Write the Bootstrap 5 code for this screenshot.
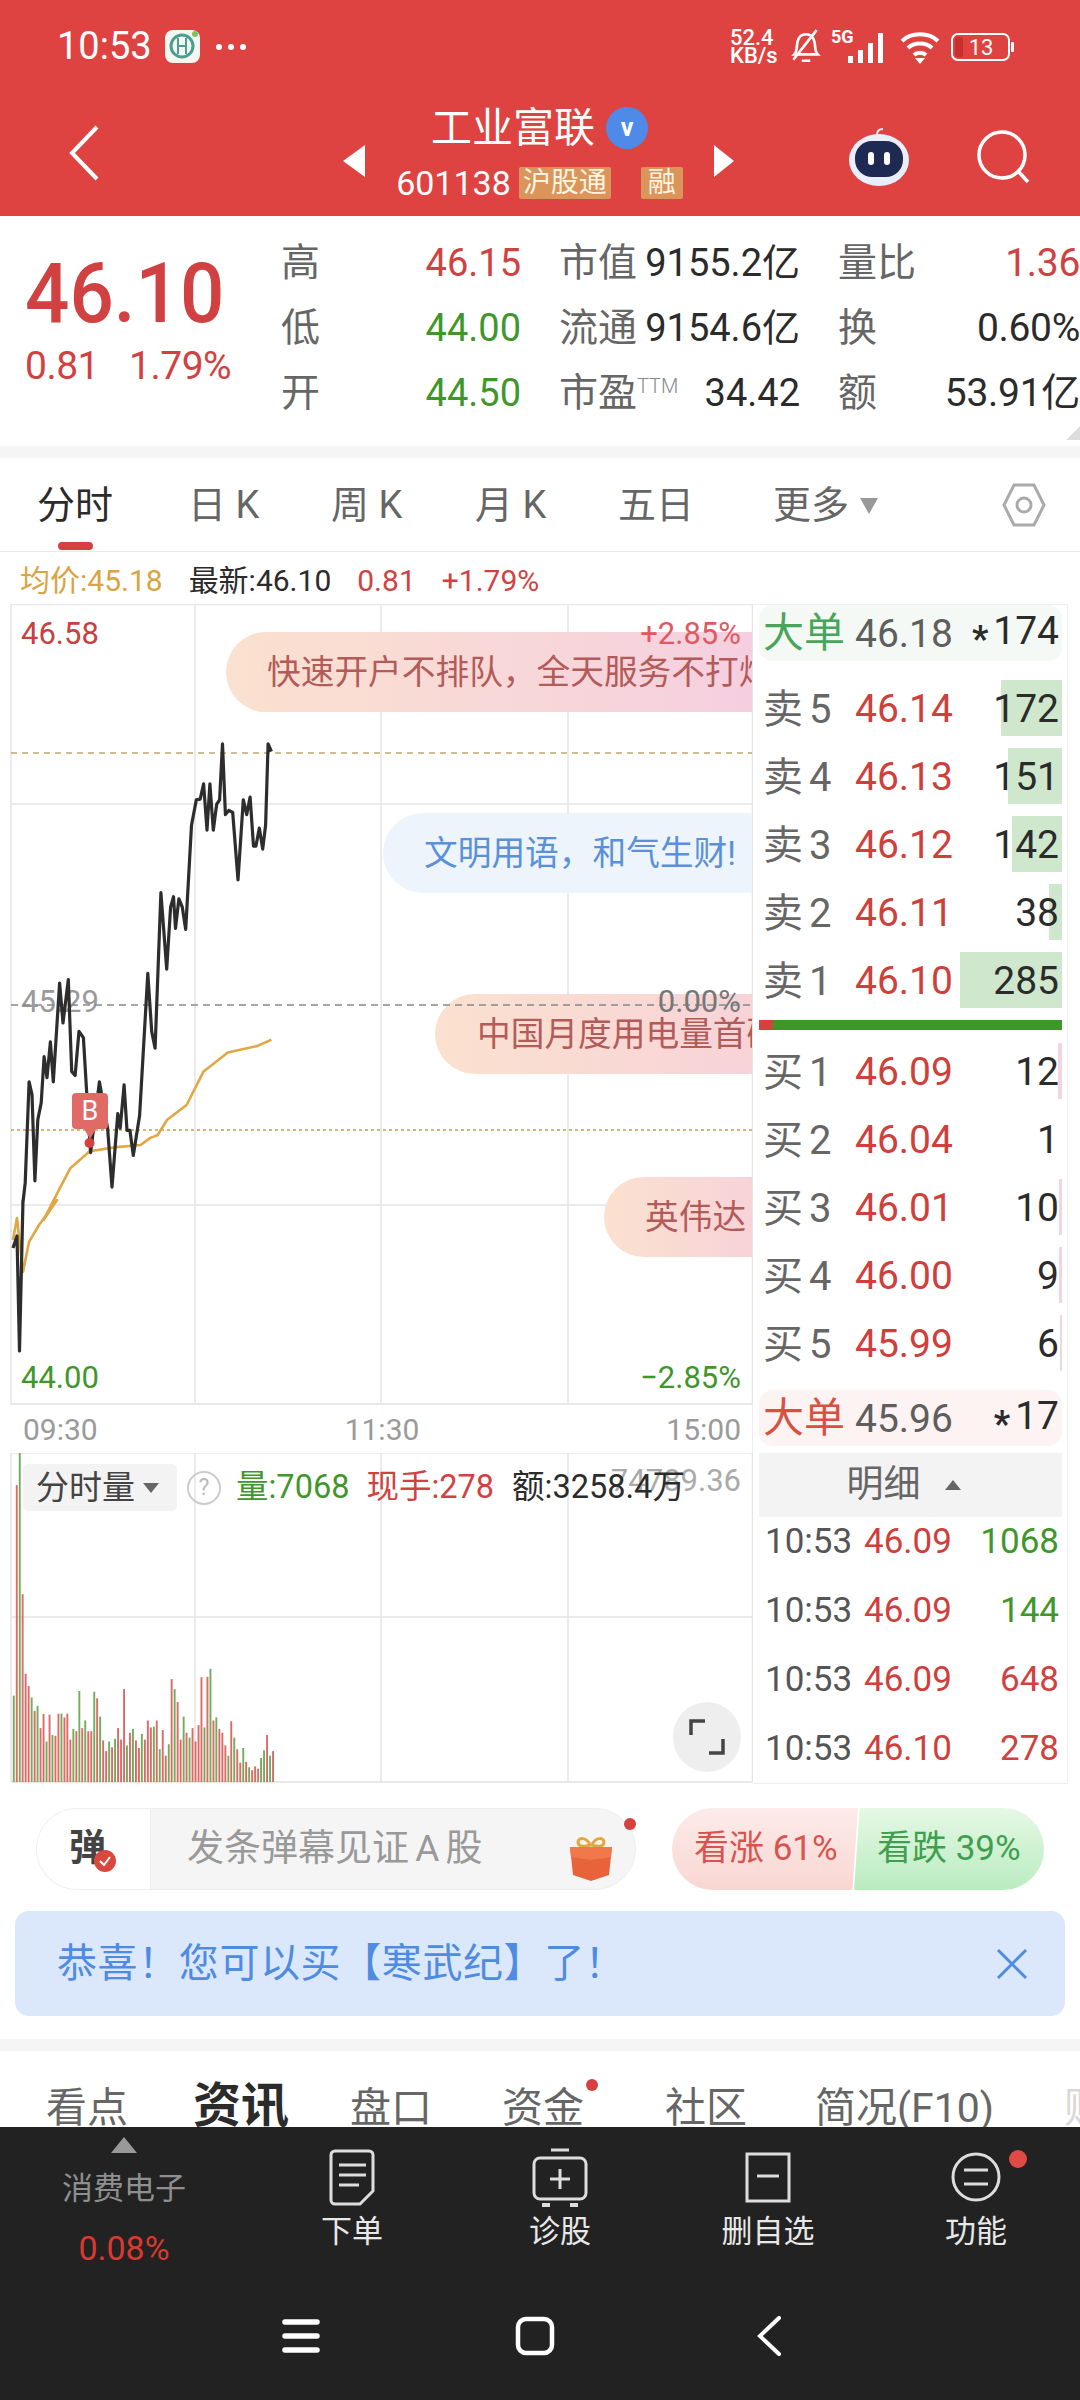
<!DOCTYPE html>
<html lang="zh-CN">
<head>
<meta charset="UTF-8">
<meta name="viewport" content="width=device-width, initial-scale=1.0">
<title>工业富联</title>
<link href="https://cdn.jsdelivr.net/npm/bootstrap@5.3.0/dist/css/bootstrap.min.css" rel="stylesheet">
<style>
body { margin: 0; background: #fff; font-family: Roboto, "Noto Sans CJK SC", sans-serif; color: #2b2b2b; }
.app-page { width: 1080px; height: 2400px; overflow: hidden; }
.red-head { background: #de4341; height: 216px; color: #fff; }
.status-row { height: 90px; padding: 3px 65px 0 57px; }
.status-time { font-size: 38px; width: 108px; }
.net-speed { font-size: 22px; line-height: 18px; font-weight: 500; width: 54px; white-space: nowrap; }
.nav-row { height: 126px; }
.back-slot { width: 343px; padding-left: 68px; }
.head-center { width: 349px; }
.stock-name { font-size: 41px; line-height: 50px; }
.v-badge { width: 42px; height: 42px; border-radius: 50%; background: #4f8ae8; font-size: 25px; font-weight: 700; margin-left: 11px; }
.stock-code { font-size: 34px; line-height: 40px; margin-top: 10px; }
.tag-box { background: #d9955a; font-size: 28px; height: 32px; line-height: 32px; padding: 0 4px; border-radius: 2px; color: #fff3e0; }
.tag-one { padding: 0 7px; margin-left: 30px; }
.quote-box { height: 230px; padding-top: 15px; }
.price-block { width: 281px; padding-left: 25px; color: #d24141; }
.price-big { font-size: 84px; line-height: 82px; font-weight: 500; margin-top: 22px; transform: scaleX(.93); transform-origin: left center; white-space: nowrap; }
.price-sub { font-size: 39px; line-height: 50px; margin-top: 6px; letter-spacing: -.5px; }
.quote-col { font-size: 38px; }
.quote-wide { font-size: 39px; letter-spacing: -.3px; }
.quote-line { height: 65px; }
.quote-label { color: #666; font-size: 39px; letter-spacing: 0; }
.up-text { color: #d24141; }
.down-text { color: #3f972c; }
.ttm-mark { font-size: 20px; font-weight: 300; color: #888; vertical-align: 13px; }
.gray-band { height: 12px; background: #f5f5f5; }
.corner-mark { right: 0; bottom: 6px; width: 0; height: 0; border-left: 14px solid transparent; border-bottom: 14px solid #ddd; }
.period-tabs { height: 94px; border-bottom: 1px solid #eaeaea; font-size: 38px; color: #666; }
.period-tab { top: 20px; line-height: 54px; white-space: nowrap; }
.tab-active { color: #2b2b2b; }
.tab-mark { left: 58px; top: 84px; width: 35px; height: 8px; border-radius: 4px; background: #d6403e; }
.info-row { height: 52px; padding: 4px 0 0 20px; font-size: 30px; gap: 26px; }
.gold-text { color: #d9a441; }
.chart-col { width: 752px; }
.price-chart { height: 801px; }
.chart-svg { display: block; }
.axis-text { font-size: 31px; line-height: 36px; white-space: nowrap; }
.pill-msg { right: 0; height: 80px; border-radius: 40px 0 0 40px; font-size: 33.7px; line-height: 82px; white-space: nowrap; overflow: hidden; }
.pill-warm { background: linear-gradient(90deg, #fbe1cf, #f5cfe0); color: #b35b58; }
.pill-warm-flat { background: linear-gradient(90deg, #fbe1cf, #f7d3d8); color: #b35b58; }
.pill-cool { background: #edf4fc; color: #5a90d8; }
.pill-wide { top: 28px; left: 226px; padding-left: 41px; }
.pill-blue { top: 209px; left: 383px; padding-left: 41px; }
.pill-mid { top: 390px; left: 435px; padding-left: 42px; }
.pill-small { top: 573px; left: 604px; padding-left: 41px; }
.axis-a { left: 21px; top: 12px; color: #c8403e; }
.axis-b { right: 11px; top: 12px; color: #de5a5e; z-index: 2; }
.axis-c { left: 21px; top: 380px; color: #9a9a9a; }
.axis-d { right: 11px; top: 380px; color: #777; z-index: 2; }
.axis-e { left: 21px; top: 756px; color: #3f972c; }
.axis-f { right: 11px; top: 756px; color: #3f972c; }
.buy-flag { left: 72px; top: 489px; width: 36px; height: 36px; border-radius: 4px; background: #df6a66; color: #fff; font-size: 27px; line-height: 36px; text-align: center; z-index: 2; }
.time-axis { height: 48px; padding: 0 11px 0 23px; font-size: 30px; color: #9a9a9a; }
.vol-chart { height: 330px; }
.vol-tools { left: 23px; top: 11px; height: 47px; font-size: 32.5px; white-space: nowrap; }
.vol-chip { width: 154px; height: 47px; background: #f3f3f3; border-radius: 5px; font-size: 33px; padding-left: 13px; color: #444; }
.tri-down { width: 0; height: 0; border-left: 8px solid transparent; border-right: 8px solid transparent; border-top: 10px solid #666; }
.help-mark { width: 34px; height: 34px; border: 2px solid #ccc; border-radius: 50%; color: #bbb; font-size: 23px; line-height: 30px; text-align: center; margin: 0 15px 0 10px; }
.ghost-num { right: 11px; top: 13px; font-size: 31px; line-height: 30px; color: #aaa; }
.expand-btn { right: 11px; top: 249px; width: 68px; height: 70px; border-radius: 50%; background: #eee; }
.book-col { width: 316px; height: 1180px; border: 1px solid #eee; padding: 0 5px 0 6px; }
.big-order { height: 56px; border-radius: 14px; font-size: 39px; padding: 2px 3px 0 4px; }
.big-sell { background: #f4f9f5; }
.big-buy { background: #fdf3f3; margin-top: 19px; }
.big-label { font-size: 41px; width: 92px; white-space: nowrap; }
.green-label { color: #47a65a; }
.red-label { color: #d9503f; }
.price-gray { color: #5e5e5e; }
.star-mark { font-size: 36px; font-weight: 700; margin-right: 5px; vertical-align: -7px; }
.book-list { padding-top: 19px; }
.book-row { height: 56px; margin-bottom: 12px; font-size: 39px; padding: 3px 3px 0 4px; }
.book-bar { right: 0; top: 0; bottom: 0; }
.bar-sell { background: #cfe7cd; }
.bar-buy { background: #f3d5dd; }
.book-name { width: 92px; color: #666; white-space: nowrap; font-size: 40px; }
.book-name i { font-style: normal; margin-left: 6px; }
.book-price { color: #cf3f3b; }
.book-qty { position: relative; }
.split-bar { height: 10px; background: #3f972c; margin: 1px 0 13px; }
.split-bar div { width: 14px; height: 10px; background: #d6403e; }
.detail-head { height: 64px; background: #f3f3f3; font-size: 37px; color: #666; margin-top: 7px; gap: 24px; padding-right: 14px; }
.tri-up { width: 0; height: 0; border-left: 8px solid transparent; border-right: 8px solid transparent; border-bottom: 10px solid #666; }
.trade-row { height: 69px; font-size: 35px; padding: 0 3px 0 6px; }
.trade-row:first-of-type { margin-top: -9px; }
.trade-time { width: 99px; color: #555; }
.danmu-row { padding: 24px 36px 0; height: 127px; }
.danmu-box { width: 600px; height: 82px; border-radius: 41px; background: #f5f5f5; border: 1px solid #eee; }
.danmu-left { width: 114px; height: 80px; background: #fff; border-radius: 41px 0 0 41px; border-right: 1px solid #eee; font-size: 37px; font-weight: 700; color: #444; padding-left: 32px; }
.check-dot { left: 57px; top: 41px; width: 22px; height: 22px; border-radius: 50%; background: #d9483f; }
.danmu-hint { font-size: 37px; word-spacing: -3px; color: #999; margin-left: 36px; white-space: nowrap; }
.gift-slot { right: 21px; top: 26px; }
.red-dot { border-radius: 50%; background: #d6403e; }
.dot-gift { right: -1px; top: 9px; width: 12px; height: 12px; }
.vote-box { width: 372px; height: 82px; margin-left: 36px; font-size: 35px; }
.vote-up { left: 0; top: 0; bottom: 0; width: 186px; background: linear-gradient(180deg, #fdecea, #f8d6d2); color: #d9534f; border-radius: 41px 0 0 41px; padding-left: 22px; clip-path: polygon(0 0, 100% 0, 97% 100%, 0 100%); white-space: nowrap; }
.vote-down { right: 0; top: 0; bottom: 0; width: 190px; background: linear-gradient(180deg, #e6f8e6, #b9ecbf); color: #3f9f4f; border-radius: 0 41px 41px 0; padding-left: 23px; clip-path: polygon(3% 0, 100% 0, 100% 100%, 0 100%); white-space: nowrap; }
.tip-bar { margin: 0 15px; height: 105px; border-radius: 14px; background: #dbe7fb; color: #4f8be0; font-size: 40px; letter-spacing: .6px; padding: 0 37px 0 42px; }
.band-low { height: 12px; background: #f5f5f5; margin-top: 23px; }
.news-tabs { height: 76px; overflow: hidden; }
.news-tab { top: 24px; font-size: 41px; line-height: 66px; color: #666; white-space: nowrap; }
.news-on { font-size: 48px; font-weight: 700; color: #2b2b2b; top: 22px; }
.dot-news { left: 586px; top: 28px; width: 12px; height: 12px; }
.dark-foot { height: 273px; background: #222; color: #e8e8e8; }
.foot-tools { height: 170px; }
.foot-first { width: 248px; padding-top: 10px; color: #8f8f8f; font-size: 31px; }
.foot-item { width: 208px; padding-top: 20px; font-size: 31px; }
.foot-icon { height: 60px; }
.foot-name { line-height: 44px; margin-top: 3px; }
.tri-small { width: 0; height: 0; border-left: 13px solid transparent; border-right: 13px solid transparent; border-bottom: 16px solid #999; }
.sector-name { line-height: 44px; margin-top: 14px; }
.sector-rate { color: #d9392f; line-height: 44px; margin-top: 15px; font-size: 34px; }
.dot-func { left: 137px; top: 23px; width: 18px; height: 18px; background: #df4a45; }
.foot-nav { padding-left: 184px; height: 103px; }
.foot-nav > div { width: 234px; margin-top: -26px; }
</style>
</head>
<body>
<div class="app-page">
  <div class="red-head">
    <div class="status-row d-flex align-items-center">
      <div class="status-time">10:53</div>
      <svg width="35" height="33" viewBox="0 0 35 33"><rect width="35" height="33" rx="8" fill="#f4f6f2"/><circle cx="17" cy="16" r="11" fill="none" stroke="#4b9e92" stroke-width="3"/><path d="M13 8v16M21 8v16M13 16h8" stroke="#4b9e92" stroke-width="2"/><circle cx="30" cy="4" r="3" fill="#7cc15a"/></svg>
      <svg width="32" height="8" viewBox="0 0 32 8" style="margin-left:15px"><circle cx="4" cy="4" r="3" fill="#fff"/><circle cx="16" cy="4" r="3" fill="#fff"/><circle cx="28" cy="4" r="3" fill="#fff"/></svg>
      <div class="flex-grow-1"></div>
      <div class="net-speed">52.4<br>KB/s</div>
      <svg width="36" height="40" viewBox="0 0 34 36" class="ms-1"><path d="M6 25c3-3 2-8 3-12 1-4 4-7 8-7s7 3 8 7c1 4 0 9 3 12H6z" fill="none" stroke="#fff" stroke-width="2.5"/><path d="M13 31h8M5 30 27 2" stroke="#fff" stroke-width="2.5"/></svg>
      <svg width="58" height="36" viewBox="0 0 58 36" style="margin-left:7px"><text x="0" y="14" fill="#fff" font-size="18" font-weight="700" font-family="Roboto">5G</text><rect x="17" y="27" width="5" height="7" fill="#fff"/><rect x="27" y="21" width="5" height="13" fill="#fff"/><rect x="37" y="14" width="5" height="20" fill="#fff"/><rect x="47" y="4" width="5" height="30" fill="#fff"/></svg>
      <svg width="44" height="36" viewBox="0 0 44 36" style="margin-left:10px"><path d="M3 12C12 3 30 3 39 12M9 19c6-6 18-6 24 0M15 26c3-3 9-3 12 0" fill="none" stroke="#fff" stroke-width="4"/><path d="M21 35l-5-6h10z" fill="#fff"/></svg>
      <svg width="64" height="32" viewBox="0 0 64 32" class="ms-2"><rect x="1" y="3" width="57" height="26" rx="6" fill="none" stroke="#fff" stroke-width="2"/><rect x="4" y="6" width="8" height="20" rx="2" fill="#c9302c"/><text x="30" y="24" text-anchor="middle" fill="#fff" font-size="22" font-family="Roboto">13</text><rect x="60" y="11" width="3" height="10" rx="1" fill="#fff"/></svg>
    </div>
    <div class="nav-row d-flex align-items-center">
      <div class="back-slot"><svg width="32" height="56" viewBox="0 0 32 56"><path d="M29 2 4 28l25 26" fill="none" stroke="#fff" stroke-width="4"/></svg></div>
      <svg width="22" height="32" viewBox="0 0 22 32" class="mt-3"><path d="M22 0v32L0 16z" fill="#fff"/></svg>
      <div class="head-center text-center">
        <div class="d-flex justify-content-center align-items-center stock-name"><span>工业富联</span><span class="v-badge d-flex align-items-center justify-content-center">v</span></div>
        <div class="d-flex justify-content-center align-items-center stock-code"><span>601138</span><span class="tag-box ms-2">沪股通</span><span class="tag-box tag-one">融</span></div>
      </div>
      <svg width="20" height="32" viewBox="0 0 20 32" class="mt-3"><path d="M0 0v32l20-16z" fill="#fff"/></svg>
      <svg width="64" height="60" viewBox="0 0 64 60" style="margin-left:113px" class="mt-2"><path d="M30 8c0-4 2-6 6-6" stroke="#e8eefb" stroke-width="2" fill="none"/><ellipse cx="32" cy="33" rx="30" ry="26" fill="#e8eefb"/><rect x="8" y="14" width="48" height="36" rx="17" fill="#1e2a52"/><rect x="21" y="25" width="6" height="13" rx="3" fill="#fff"/><rect x="37" y="25" width="6" height="13" rx="3" fill="#fff"/></svg>
      <svg width="54" height="54" viewBox="0 0 54 54" style="margin-left:66px" class="mt-2"><circle cx="25" cy="25" r="23" fill="none" stroke="#fff" stroke-width="3.5"/><path d="m41 41 10 11" stroke="#fff" stroke-width="3.5"/></svg>
    </div>
  </div>

  <div class="quote-box d-flex position-relative">
    <div class="price-block">
      <div class="price-big">46.10</div>
      <div class="price-sub d-flex"><span>0.81</span><span style="margin-left:30px">1.79%</span></div>
    </div>
    <div class="quote-col" style="width:240px">
      <div class="quote-line d-flex justify-content-between align-items-center"><span class="quote-label">高</span><span class="up-text">46.15</span></div>
      <div class="quote-line d-flex justify-content-between align-items-center"><span class="quote-label">低</span><span class="down-text">44.00</span></div>
      <div class="quote-line d-flex justify-content-between align-items-center"><span class="quote-label">开</span><span class="down-text">44.50</span></div>
    </div>
    <div class="quote-col" style="width:241px;margin-left:38px">
      <div class="quote-line d-flex justify-content-between align-items-center"><span class="quote-label">市值</span><span>9155.2亿</span></div>
      <div class="quote-line d-flex justify-content-between align-items-center"><span class="quote-label">流通</span><span>9154.6亿</span></div>
      <div class="quote-line d-flex justify-content-between align-items-center"><span class="quote-label">市盈<span class="ttm-mark">TTM</span></span><span>34.42</span></div>
    </div>
    <div class="quote-col quote-wide" style="width:242px;margin-left:38px">
      <div class="quote-line d-flex justify-content-between align-items-center"><span class="quote-label">量比</span><span class="up-text">1.36</span></div>
      <div class="quote-line d-flex justify-content-between align-items-center"><span class="quote-label">换</span><span>0.60%</span></div>
      <div class="quote-line d-flex justify-content-between align-items-center"><span class="quote-label">额</span><span>53.91亿</span></div>
    </div>
    <div class="corner-mark position-absolute"></div>
  </div>
  <div class="gray-band"></div>

  <div class="period-tabs position-relative">
    <div class="period-tab tab-active position-absolute" style="left:37px">分时</div>
    <div class="period-tab position-absolute" style="left:188px">日 K</div>
    <div class="period-tab position-absolute" style="left:331px">周 K</div>
    <div class="period-tab position-absolute" style="left:475px">月 K</div>
    <div class="period-tab position-absolute" style="left:618px">五日</div>
    <div class="period-tab position-absolute" style="left:773px">更多</div>
    <svg class="position-absolute" style="left:860px;top:40px" width="18" height="16" viewBox="0 0 18 16"><path d="M0 0h18L9 16z" fill="#999"/></svg>
    <svg class="position-absolute" style="left:1002px;top:24px" width="44" height="46" viewBox="0 0 44 46"><path d="M12 3h20l10 20-10 20H12L2 23z" fill="none" stroke="#aaa" stroke-width="3"/><circle cx="22" cy="23" r="7" fill="none" stroke="#aaa" stroke-width="3"/></svg>
    <div class="tab-mark position-absolute"></div>
  </div>

  <div class="info-row d-flex align-items-center">
    <span class="gold-text">均价:45.18</span><span>最新:46.10</span><span class="up-text">0.81</span><span class="up-text">+1.79%</span>
  </div>

  <div class="d-flex">
    <div class="chart-col">
      <div class="price-chart position-relative">
        <svg id="priceSvg" class="chart-svg" width="753" height="801" viewBox="0 604 753 801"></svg>
        <div class="pill-msg pill-warm pill-wide position-absolute">快速开户不排队，全天服务不打烊</div>
        <div class="pill-msg pill-cool pill-blue position-absolute">文明用语，和气生财!</div>
        <div class="pill-msg pill-warm-flat pill-mid position-absolute">中国月度用电量首破万亿</div>
        <div class="pill-msg pill-warm-flat pill-small position-absolute">英伟达</div>
        <div class="axis-text axis-a position-absolute">46.58</div>
        <div class="axis-text axis-b position-absolute">+2.85%</div>
        <div class="axis-text axis-c position-absolute">45.29</div>
        <div class="axis-text axis-d position-absolute">0.00%</div>
        <div class="axis-text axis-e position-absolute">44.00</div>
        <div class="axis-text axis-f position-absolute">−2.85%</div>
        <div class="buy-flag position-absolute">B</div>
      </div>
      <div class="time-axis d-flex justify-content-between align-items-center"><span>09:30</span><span>11:30</span><span>15:00</span></div>
      <div class="vol-chart position-relative">
        <svg id="volSvg" class="chart-svg" width="753" height="330" viewBox="0 1453 753 330"></svg>
        <div class="ghost-num position-absolute">74789.36</div>
        <div class="vol-tools position-absolute d-flex align-items-center">
          <div class="vol-chip d-flex align-items-center"><span>分时量</span><span class="tri-down ms-2"></span></div>
          <div class="help-mark">?</div>
          <span class="down-text">量:7068</span><span class="up-text" style="margin-left:17px">现手:278</span><span style="margin-left:18px">额:3258.4万</span>
        </div>
        <div class="expand-btn position-absolute d-flex align-items-center justify-content-center">
          <svg width="36" height="36" viewBox="0 0 36 36"><path d="M16 2H2v14M20 34h14V20" fill="none" stroke="#444" stroke-width="3.5"/></svg>
        </div>
      </div>
    </div>

    <div class="book-col">
      <div class="big-order big-sell d-flex align-items-center"><span class="big-label green-label">大单</span><span class="price-gray">46.18</span><span class="ms-auto"><span class="star-mark">*</span>174</span></div>
      <div class="book-list" id="sellList"></div>
      <div class="split-bar"><div></div></div>
      <div id="buyList"></div>
      <div class="big-order big-buy d-flex align-items-center"><span class="big-label red-label">大单</span><span class="price-gray">45.96</span><span class="ms-auto"><span class="star-mark">*</span>17</span></div>
      <div class="detail-head d-flex align-items-center justify-content-center"><span>明细</span><span class="tri-up"></span></div>
      <div id="tradeList"></div>
    </div>
  </div>

  <div class="danmu-row d-flex">
    <div class="danmu-box d-flex align-items-center position-relative">
      <div class="danmu-left position-relative d-flex align-items-center">弹<div class="check-dot position-absolute d-flex align-items-center justify-content-center"><svg width="14" height="12" viewBox="0 0 14 12"><path d="m2 6 4 4 6-8" fill="none" stroke="#fff" stroke-width="2"/></svg></div></div>
      <div class="danmu-hint">发条弹幕见证 A 股</div>
      <svg class="gift-slot position-absolute" width="46" height="46" viewBox="0 0 46 46"><path d="M22 10c-3-8-12-8-12-3s6 5 12 3zm2 0c3-8 12-8 12-3s-6 5-12 3z" fill="none" stroke="#e0a93e" stroke-width="3"/><path d="M2 12h42l-3 28-18 6-18-6z" fill="#e8633a"/><path d="M2 12h42l-1 10-20 3-20-3z" fill="#f0784a"/></svg>
      <div class="red-dot dot-gift position-absolute"></div>
    </div>
    <div class="vote-box position-relative">
      <div class="vote-up position-absolute d-flex align-items-center">看涨 61%</div>
      <div class="vote-down position-absolute d-flex align-items-center">看跌 39%</div>
    </div>
  </div>

  <div class="tip-bar d-flex align-items-center justify-content-between">
    <span>恭喜！您可以买【寒武纪】了！</span>
    <svg width="32" height="32" viewBox="0 0 32 32"><path d="m2 2 28 28M30 2 2 30" stroke="#4f8be0" stroke-width="3"/></svg>
  </div>
  <div class="band-low"></div>

  <div class="news-tabs position-relative">
    <div class="news-tab position-absolute" style="left:46px">看点</div>
    <div class="news-tab news-on position-absolute" style="left:193px">资讯</div>
    <div class="news-tab position-absolute" style="left:350px">盘口</div>
    <div class="news-tab position-absolute" style="left:502px">资金</div>
    <div class="red-dot dot-news position-absolute"></div>
    <div class="news-tab position-absolute" style="left:665px">社区</div>
    <div class="news-tab position-absolute" style="left:815px">简况(F10)</div>
    <div class="news-tab position-absolute" style="left:1064px;opacity:.25">财务</div>
  </div>

  <div class="dark-foot">
    <div class="foot-tools d-flex">
      <div class="foot-first d-flex flex-column align-items-center"><div class="tri-small"></div><div class="sector-name">消费电子</div><div class="sector-rate">0.08%</div></div>
      <div class="foot-item d-flex flex-column align-items-center">
        <svg class="foot-icon" width="48" height="60" viewBox="0 0 48 60"><path d="M7 4h34a4 4 0 0 1 4 4v36L32 57H7a4 4 0 0 1-4-4V8a4 4 0 0 1 4-4z" fill="none" stroke="#ddd" stroke-width="3"/><path d="M11 18h27M11 28h27M11 38h20" stroke="#ddd" stroke-width="3"/></svg>
        <div class="foot-name">下单</div>
      </div>
      <div class="foot-item d-flex flex-column align-items-center">
        <svg class="foot-icon" width="56" height="60" viewBox="0 0 56 60"><path d="M19 3h18" stroke="#ddd" stroke-width="3"/><rect x="2" y="11" width="52" height="41" rx="6" fill="none" stroke="#ddd" stroke-width="3"/><path d="M28 22v20M18 32h20" stroke="#ddd" stroke-width="3"/><path d="M10 58h8M38 58h8" stroke="#ddd" stroke-width="4"/></svg>
        <div class="foot-name">诊股</div>
      </div>
      <div class="foot-item d-flex flex-column align-items-center">
        <svg class="foot-icon" width="46" height="60" viewBox="0 0 46 60"><rect x="2" y="7" width="42" height="47" fill="none" stroke="#ddd" stroke-width="3"/><path d="M12 29h22" stroke="#ddd" stroke-width="3"/></svg>
        <div class="foot-name">删自选</div>
      </div>
      <div class="foot-item d-flex flex-column align-items-center position-relative">
        <svg class="foot-icon" width="52" height="60" viewBox="0 0 52 60"><circle cx="26" cy="30" r="23" fill="none" stroke="#ddd" stroke-width="3"/><path d="M14 23h24M14 37h24" stroke="#ddd" stroke-width="3"/></svg>
        <div class="foot-name">功能</div>
        <div class="red-dot dot-func position-absolute"></div>
      </div>
    </div>
    <div class="foot-nav d-flex">
      <div class="d-flex justify-content-center align-items-center"><svg width="38" height="36" viewBox="0 0 38 36"><path d="M3 4h32M3 18h32M3 32h32" stroke="#fff" stroke-width="5.5" stroke-linecap="round"/></svg></div>
      <div class="d-flex justify-content-center align-items-center"><svg width="40" height="40" viewBox="0 0 40 40"><rect x="3" y="3" width="34" height="34" rx="8" fill="none" stroke="#fff" stroke-width="4.5"/></svg></div>
      <div class="d-flex justify-content-center align-items-center"><svg width="26" height="40" viewBox="0 0 26 40"><path d="M23 2 4 20l19 18" fill="none" stroke="#fff" stroke-width="4" stroke-linecap="round"/></svg></div>
    </div>
  </div>
</div>

<script>
// order book
const sells = [['5','46.14','172',61],['4','46.13','151',54],['3','46.12','142',50],['2','46.11','38',13],['1','46.10','285',102]];
const buys = [['1','46.09','12',4],['2','46.04','1',0],['3','46.01','10',3],['4','46.00','9',3],['5','45.99','6',2]];
const trades = [['46.09','1068','down-text'],['46.09','144','down-text'],['46.09','648','up-text'],['46.10','278','up-text']];

function bookRows(list, name, barClass) {
  return list.map(r => `
    <div class="book-row d-flex align-items-center position-relative">
      <div class="book-bar ${barClass} position-absolute" style="width:${r[3]}px"></div>
      <span class="book-name position-relative">${name}<i>${r[0]}</i></span>
      <span class="book-price position-relative">${r[1]}</span>
      <span class="book-qty ms-auto">${r[2]}</span>
    </div>`).join('');
}
document.getElementById('sellList').innerHTML = bookRows(sells, '卖', 'bar-sell');
document.getElementById('buyList').innerHTML = bookRows(buys, '买', 'bar-buy');
document.getElementById('tradeList').innerHTML = trades.map(t => `
  <div class="trade-row d-flex align-items-center">
    <span class="trade-time">10:53</span><span class="book-price">${t[0]}</span><span class="ms-auto ${t[2]}">${t[1]}</span>
  </div>`).join('');

// price chart, points were read off the reference
const px = x => (x / 2.063).toFixed(1);
const py = y => (560 + y / 2.376).toFixed(1);
const priceZoom = [[47,1530],[52,1480],[60,1240],[66,1270],[72,1475],[78,1330],[85,1290],[91,1180],[97,1230],[104,1145],[110,1240],[123,1005],[130,1100],[141,997],[148,1215],[155,1225],[163,1120],[172,1135],[180,1290],[187,1408],[205,1240],[222,1350],[231,1490],[243,1315],[248,1350],[256,1247],[262,1355],[268,1355],[275,1415],[288,1320],[305,982],[313,1120],[320,1160],[332,790],[344,972],[352,825],[358,800],[362,875],[369,805],[376,825],[383,878],[395,630],[405,570],[413,568],[420,532],[427,642],[433,532],[440,642],[447,580],[453,570],[459,437],[465,605],[472,595],[480,600],[491,760],[502,570],[509,605],[516,563],[523,680],[528,680],[535,637],[542,687],[548,630],[553,437],[560,455]];
const avgZoom = [[90,1568],[120,1500],[145,1445],[185,1405],[240,1395],[290,1390],[310,1373],[325,1367],[345,1330],[385,1295],[420,1215],[470,1170],[530,1155],[560,1140]];
const pricePts = '13,1248 17,1236 19.5,1351 23,1200 ' + priceZoom.map(p => px(p[0]) + ',' + py(p[1])).join(' ');
const avgPts = '13,1240 17,1218 23,1272 29,1242 39,1225 57,1200 ' + avgZoom.map(p => px(p[0]) + ',' + py(p[1])).join(' ');

let g = '';
[11, 195, 381, 568, 752.5].forEach(x => g += `<line x1="${x}" y1="604" x2="${x}" y2="1405" stroke="#e4e4e4" stroke-width="1.5"/>`);
[804, 1205].forEach(y => g += `<line x1="11" y1="${y}" x2="752" y2="${y}" stroke="#e4e4e4" stroke-width="1.5"/>`);
g += `<line x1="11" y1="604.5" x2="752" y2="604.5" stroke="#e8e8e8" stroke-width="1.5"/><line x1="11" y1="1404" x2="752" y2="1404" stroke="#e8e8e8" stroke-width="2"/>`;
document.getElementById('priceSvg').innerHTML = g;

// these go on top of the pills, so the lines are added after them in a second svg
const over = document.createElementNS('http://www.w3.org/2000/svg', 'svg');
over.setAttribute('class', 'position-absolute');
over.setAttribute('style', 'left:0;top:0;z-index:1');
over.setAttribute('width', '753');
over.setAttribute('height', '801');
over.setAttribute('viewBox', '0 604 753 801');
over.innerHTML = `
  <line x1="11" y1="753" x2="752" y2="753" stroke="#c4a56a" stroke-width="1.5" stroke-dasharray="6 5"/>
  <line x1="11" y1="1005" x2="752" y2="1005" stroke="#888" stroke-width="1.5" stroke-dasharray="7 5"/>
  <line x1="11" y1="1130" x2="752" y2="1130" stroke="#cf9a4a" stroke-width="1.5" stroke-dasharray="3 3"/>
  <polyline points="${avgPts}" fill="none" stroke="#e0a745" stroke-width="2.6" stroke-linejoin="round"/>
  <polyline points="${pricePts}" fill="none" stroke="#2d2d2d" stroke-width="3.2" stroke-linejoin="round"/>
  <path d="M84 1129l6 10 6-10z" fill="#df6a66"/>
  <circle cx="89.5" cy="1143" r="5" fill="#d6403e"/>`;
document.querySelector('.price-chart').appendChild(over);

// volume bars, tops in zoomed px of the reference
const tops = [1295,745,660,1030,1238,1270,1300,1335,1322,1380,1343,1415,1345,1398,1400,1342,1342,1352,1342,1410,1382,1388,1283,1380,1360,1388,1388,1285,1302,1350,1412,1440,1415,1430,1408,1380,1410,1278,1425,1392,1382,1412,1432,1395,1410,1360,1378,1376,1360,1435,1385,1452,1422,1252,1278,1312,1410,1350,1392,1405,1380,1415,1372,1247,1378,1246,1225,1360,1352,1382,1392,1425,1452,1362,1405,1435,1470,1432,1468,1482,1490,1480,1486,1458,1438,1398,1452,1440];
const colors = 'grgrrrgrgrrgrgrrgrrrgrgrgrrgrgrrgrgrrrgrgrrgrrrgrgrrgrgrrgrgrrrrgrgrgrrrgrgrrgrgrrrggrg';
let v = '';
[11, 195, 381, 568, 752.5].forEach(x => v += `<line x1="${x}" y1="1453" x2="${x}" y2="1782" stroke="#e4e4e4" stroke-width="1.5"/>`);
v += `<line x1="11" y1="1453" x2="752" y2="1453" stroke="#e8e8e8" stroke-width="1.5"/><line x1="11" y1="1617" x2="752" y2="1617" stroke="#e4e4e4" stroke-width="1.5"/><line x1="11" y1="1782" x2="752" y2="1782" stroke="#e8e8e8" stroke-width="2"/>`;
tops.forEach((t, i) => {
  const y = 1200 + t / 2.613;
  const x = 12.8 + i * 2.98;
  const c = colors[i] === 'g' ? '#6fae5c' : '#de6a66';
  v += `<rect x="${x.toFixed(1)}" y="${y.toFixed(1)}" width="1.9" height="${(1782 - y).toFixed(1)}" fill="${c}"/>`;
});
document.getElementById('volSvg').innerHTML = v;
</script>
<script src="https://cdn.jsdelivr.net/npm/bootstrap@5.3.0/dist/js/bootstrap.bundle.min.js"></script>
</body>
</html>
